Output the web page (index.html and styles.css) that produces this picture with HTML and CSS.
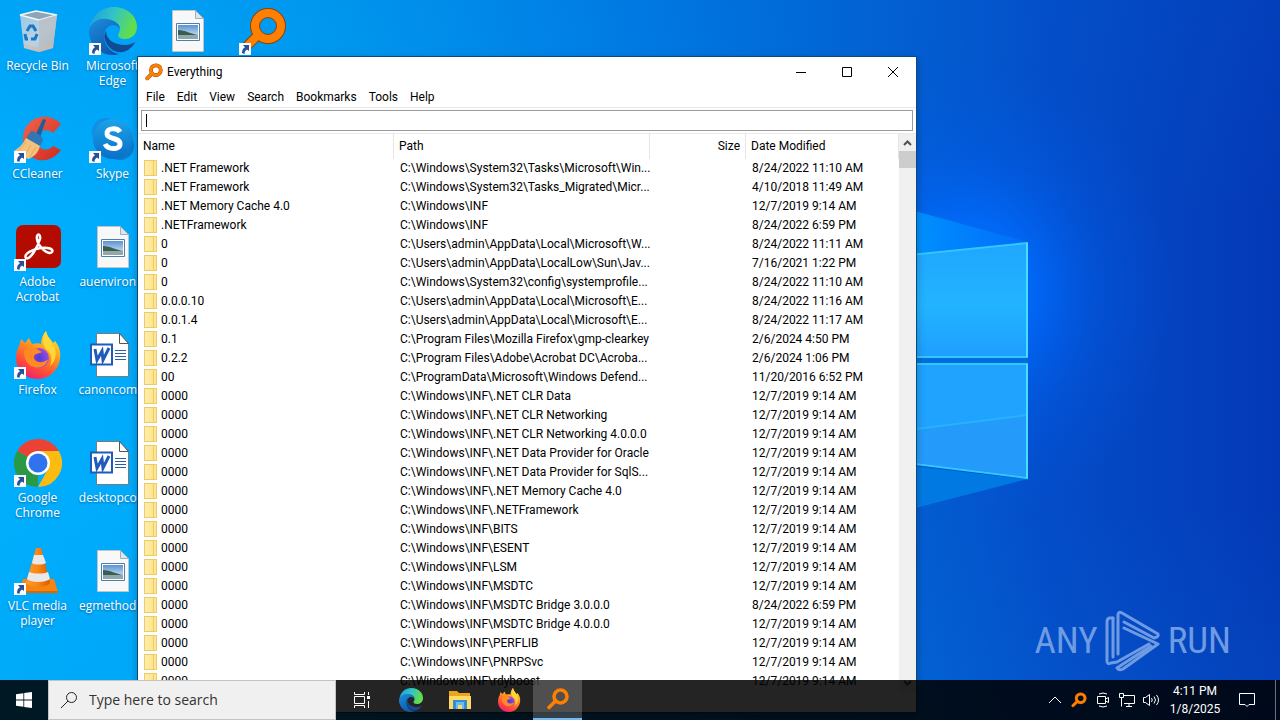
FILE: index.html
```html
<!DOCTYPE html>
<html lang="en">
<head>
<meta charset="utf-8">
<meta name="viewport" content="width=device-width, initial-scale=1">
<title>Everything</title>
<link rel="stylesheet" href="styles.css">
</head>
<body>
<svg class="defs" aria-hidden="true">
  <defs>
    <linearGradient id="edgeA" x1="0" y1="0" x2="1" y2="0.3"><stop offset="0" stop-color="#1c9be0"/><stop offset=".5" stop-color="#2fc3c9"/><stop offset="1" stop-color="#62dd4c"/></linearGradient>
    <linearGradient id="edgeB" x1="0" y1="0" x2="0.6" y2="1"><stop offset="0" stop-color="#1b8fdd"/><stop offset="1" stop-color="#0f57ae"/></linearGradient>
    <linearGradient id="ffA" x1="0.8" y1="0" x2="0.3" y2="1"><stop offset="0" stop-color="#ffe73c"/><stop offset=".4" stop-color="#ff9a1f"/><stop offset=".75" stop-color="#ff4b3a"/><stop offset="1" stop-color="#f01f72"/></linearGradient>
    <radialGradient id="ffB"><stop offset="0" stop-color="#4d3bd0"/><stop offset="1" stop-color="#9a4be0"/></radialGradient>
    <linearGradient id="sky" x1="0" y1="0" x2="0" y2="1"><stop offset="0" stop-color="#5b93d3"/><stop offset="1" stop-color="#e4f1fa"/></linearGradient>
    <linearGradient id="skypeA" x1="0" y1="0" x2="0" y2="1"><stop offset="0" stop-color="#1ba3ea"/><stop offset="1" stop-color="#0a6fc8"/></linearGradient>
    <linearGradient id="binA" x1="0" y1="0" x2="1" y2="1"><stop offset="0" stop-color="#a9cbe6"/><stop offset=".6" stop-color="#ccd6de"/><stop offset="1" stop-color="#a3adb6"/></linearGradient>
    <linearGradient id="coneA" x1="0" y1="0" x2="1" y2="0"><stop offset="0" stop-color="#ff9b2e"/><stop offset=".5" stop-color="#fb8512"/><stop offset="1" stop-color="#d45d00"/></linearGradient>
    <linearGradient id="ccA" x1="0" y1="0" x2="1" y2="1"><stop offset="0" stop-color="#f2644c"/><stop offset="1" stop-color="#cf2a20"/></linearGradient>
    <symbol id="edge" viewBox="0 0 48 48">
      <path d="M1 22C2 9 12 0 25 0c13 0 23 9 23 20 0 8-6 12-12 12-5 0-7-2-7-4 0-1 2-3 2-6 0-5-5-9-12-9C11 13 4 16 1 22z" fill="url(#edgeA)"/>
      <path d="M0 24c1-8 9-13 18-12 8 1 13 6 13 10-1-2-4-4-7-4-5 0-9 5-9 11 0 9 7 17 15 18-2 1-4 1-6 1C10 48 0 37 0 24z" fill="url(#edgeB)"/>
      <path d="M17 24c-2 3-2 6-1 9 3 9 12 15 21 11 4-2 8-6 9-9-3 2-6 3-10 3-10 0-19-5-19-14z" fill="#124a96"/>
    </symbol>
    <symbol id="firefox" viewBox="0 0 48 48">
      <path d="M5 15 7 8l4 4 4-5 3 6c4-1 7-1 9 0 0-5 2-10 5-13 1 6 5 8 7 12l2-2c5 6 6 12 5 18-2 12-11 20-22 20C11 48 2 39 2 27c0-5 1-9 3-12z" fill="url(#ffA)"/>
      <circle cx="25" cy="27" r="10" fill="url(#ffB)"/>
      <path d="M10 20c4-3 9-3 13-2l5 3c-3 2-7 1-8 4-1 4 4 7 8 6 3 0 4-2 6-2-2 6-8 9-14 7-6-1-10-7-10-16z" fill="#ff8a22"/>
      <path d="M32 0c1 6 5 9 8 15 3 7 2 15-4 20 3-7 1-13-3-16-5-5-5-12-1-19z" fill="#ffd838"/>
    </symbol>
    <symbol id="everything" viewBox="0 0 48 48">
      <path d="M18 29 6 41" stroke="#8e4205" stroke-width="10" stroke-linecap="round"/>
      <circle cx="29" cy="19" r="13" fill="none" stroke="#8e4205" stroke-width="10"/>
      <path d="M19 28 6 41" stroke="#ff8000" stroke-width="8" stroke-linecap="round"/>
      <circle cx="29" cy="19" r="13" fill="none" stroke="#ff8000" stroke-width="8"/>
    </symbol>
    <symbol id="everything-flat" viewBox="0 0 48 48">
      <path d="M18 29 6 41" stroke="#ff8000" stroke-width="7" stroke-linecap="round"/>
      <circle cx="29" cy="19" r="13" fill="none" stroke="#ff8000" stroke-width="7"/>
    </symbol>
    <symbol id="shortcut" viewBox="0 0 12 12">
      <path d="M0 0h12v12H0z" fill="#fafcff"/>
      <path d="M4 2h6v6L8 6.500C6 8 5.500 9 5.500 11L3 10c0-3 1-4.500 3-5.800z" fill="#27509b"/>
    </symbol>
    <symbol id="picture-file" viewBox="0 0 32 42">
      <path d="M.5.5h23l8 8v33H.5z" fill="#f8f8f8" stroke="#c4c4c4"/>
      <path d="M23.500.5v8h8z" fill="#dfe6ea" stroke="#9fb0b8"/>
      <path d="M4.500 13.500h23v17h-23z" fill="#fff" stroke="#4d7fa8"/>
      <path d="M6 15h20v14H6z" fill="url(#sky)"/>
      <path d="M6 20c7 0 13 4 20 5v1H6z" fill="#3c5c50"/>
      <path d="M6 25h20v4H6z" fill="#8fa9aa"/>
    </symbol>
    <symbol id="word-file" viewBox="0 0 39 44">
      <path d="M6.500.5h23l9 10v33h-32z" fill="#fff" stroke="#7b7b7b"/>
      <path d="M29.500.5v10h9z" fill="#fff" stroke="#555"/>
      <path d="M1 11.500h21v20H1z" fill="#fff" stroke="#1f5bbd" stroke-width="2"/>
      <path d="m5 16 2 11 5-9 1 9 6-12" fill="none" stroke="#1f5bbd" stroke-width="3"/>
      <path d="M25 17.500h11M25 20.500h11M25 23.500h11M25 26.500h11" stroke="#2c5ea8"/>
    </symbol>
    <symbol id="chrome" viewBox="0 0 48 48">
      <path d="M24 24 3.200 12A24 24 0 0 1 44.800 12z" fill="#ea4335"/>
      <path d="M24 24v24A24 24 0 0 1 3.200 12z" fill="#2a9945"/>
      <path d="M24 12h20.800A24 24 0 0 1 24 48l10-18z" fill="#fbbc12"/>
      <circle cx="24" cy="24" r="12" fill="#fff"/>
      <circle cx="24" cy="24" r="9.500" fill="#2f73ee"/>
    </symbol>
  </defs>
</svg>

<main class="desktop">
  <svg class="wallpaper" viewBox="0 0 1280 720" preserveAspectRatio="none" aria-hidden="true">
    <defs>
      <linearGradient id="base" x1="0" y1="0" x2="1" y2="0">
        <stop offset="0" stop-color="#00aefc"/><stop offset=".12" stop-color="#00aafb"/><stop offset=".28" stop-color="#009cf1"/><stop offset=".45" stop-color="#0084e8"/><stop offset=".6" stop-color="#006edc"/><stop offset=".73" stop-color="#035bd0"/><stop offset=".82" stop-color="#044cc8"/><stop offset="1" stop-color="#0439b6"/>
      </linearGradient>
      <linearGradient id="shade" x1="0" y1="0" x2="0" y2="1"><stop offset="0" stop-color="#0060d0" stop-opacity=".14"/><stop offset=".3" stop-color="#0060d0" stop-opacity="0"/><stop offset=".7" stop-color="#0084e0" stop-opacity="0"/><stop offset="1" stop-color="#0090e0" stop-opacity=".12"/></linearGradient>
      <radialGradient id="glow"><stop offset="0" stop-color="#0074ff"/><stop offset=".3" stop-color="#006cff" stop-opacity=".8"/><stop offset=".6" stop-color="#0060f0" stop-opacity=".35"/><stop offset="1" stop-color="#0058e0" stop-opacity="0"/></radialGradient>
      <linearGradient id="pane" x1="0" y1="0" x2="0" y2="1"><stop offset="0" stop-color="#20a6ff"/><stop offset=".55" stop-color="#22b4ff"/><stop offset="1" stop-color="#1f9eff"/></linearGradient>
      <linearGradient id="beam" x1="0" y1="0" x2="1" y2="0"><stop offset="0" stop-color="#0098ff"/><stop offset="1" stop-color="#0080ff" stop-opacity=".3"/></linearGradient>
    </defs>
    <path d="M0 0h1280v720H0z" fill="url(#base)"/>
    <path d="M0 0h1280v720H0z" fill="url(#shade)"/>
    <ellipse cx="970" cy="290" rx="210" ry="230" fill="url(#glow)"/>
    <path d="M900 207 1028 242 900 255z" fill="url(#beam)"/>
    <path d="M900 465 1028 479 900 512z" fill="#0082e6" opacity=".8"/>
    <path d="M900 256 1027 243V357H900z" fill="url(#pane)" stroke="#34c6ff" stroke-width="2"/>
    <path d="M900 364H1027V478L900 462z" fill="#20a2ff" stroke="#34c6ff" stroke-width="2"/>
    <path d="M900 431 1027 415V477L900 461z" fill="#249bfa"/>
    <path d="M900 431 1027 415" stroke="#24b4ff" stroke-width="2"/>
    <path d="M900 358h128v5H900z" fill="#006ddc"/>
    <path d="M1027 243v114M1027 364v114" stroke="#45e0ff" stroke-width="2"/>
  </svg>

  <nav class="shortcuts" aria-label="Desktop">
    <a class="shortcut" href="#bin"><span class="art"><svg class="pic" viewBox="0 0 48 48"><path d="M6 8 22 4l21 4-4 33-14 4-15-4z" fill="url(#binA)" opacity=".92"/><path d="M6 8 22 4l21 4-18 5z" fill="#8fa5b6" stroke="#f2f7fa" stroke-width="1.500"/><path d="M25 13V45l14-4 4-33z" fill="#b8bec4" opacity=".75"/><path d="M10 37 25 41l14-4v4l-14 4-15-4z" fill="#d6b9a6" opacity=".6"/><path d="m13 24 3-5h3l3 5M23 27l-2 5h-4M14 32h-2l-1-5" fill="none" stroke="#1877c8" stroke-width="3"/></svg></span><span>Recycle Bin</span></a>
    <a class="shortcut" href="#edge"><span class="art"><svg class="pic"><use href="#edge"/></svg><svg class="arrow"><use href="#shortcut"/></svg></span><span>Microsoft Edge</span></a>
    <a class="shortcut" href="#image" aria-label="Image file"><span class="art"><svg class="file"><use href="#picture-file"/></svg></span></a>
    <a class="shortcut" href="#everything" aria-label="Everything"><span class="art"><svg class="pic"><use href="#everything"/></svg><svg class="arrow"><use href="#shortcut"/></svg></span></a>

    <a class="shortcut" href="#ccleaner"><span class="art"><svg class="pic" viewBox="0 0 48 48"><path d="M47 9 39 18c-6-6-16-2-16 7s10 13 16 6l8 4C34 53 9 46 9 24 9 2 34-5 47 9z" fill="url(#ccA)"/><path d="M29 4 32 5 25 25 20 23z" fill="#17609c"/><path d="M17 16c6 1 11 5 12 9l-4 8-14-8z" fill="#3277b4"/><path d="M12 23 26 31C24 38 20 42 14 44L0 36C5 33 9 29 12 23z" fill="#f3c27c"/><path d="M12 27 4 36M17 30l-6 10M22 32l-6 10" stroke="#e2ac62"/></svg><svg class="arrow"><use href="#shortcut"/></svg></span><span>CCleaner</span></a>
    <a class="shortcut" href="#skype"><span class="art"><svg class="pic" viewBox="0 0 48 48"><circle cx="17" cy="17" r="14" fill="#138fe0"/><circle cx="31" cy="31" r="14" fill="#0b7ad0"/><circle cx="24" cy="24" r="20" fill="url(#skypeA)"/><path d="M31 17C28 12 17 13 18 19c1 6 13 3 13 10 0 6-12 6-15 0" fill="none" stroke="#fff" stroke-width="5"/></svg><svg class="arrow"><use href="#shortcut"/></svg></span><span>Skype</span></a>
    <span></span><span></span>

    <a class="shortcut" href="#acrobat"><span class="art"><svg class="pic" viewBox="0 0 48 48"><rect x="2" y="2" width="45" height="43" rx="7" fill="#b30b00"/><path d="M12 35c-3-4 7-9 15-10 7-1 13 1 11 4-3 4-14-5-15-13-1-6 4-6 3 0-2 7-10 22-14 19z" fill="none" stroke="#fff" stroke-width="2.500"/></svg><svg class="arrow"><use href="#shortcut"/></svg></span><span>Adobe Acrobat</span></a>
    <a class="shortcut" href="#auenviron"><span class="art"><svg class="file"><use href="#picture-file"/></svg></span><span>auenviron...</span></a>
    <span></span><span></span>

    <a class="shortcut" href="#firefox"><span class="art"><svg class="pic"><use href="#firefox"/></svg><svg class="arrow"><use href="#shortcut"/></svg></span><span>Firefox</span></a>
    <a class="shortcut" href="#canoncom"><span class="art word"><svg class="doc"><use href="#word-file"/></svg></span><span>canoncom...</span></a>
    <span></span><span></span>

    <a class="shortcut" href="#chrome"><span class="art"><svg class="pic"><use href="#chrome"/></svg><svg class="arrow"><use href="#shortcut"/></svg></span><span>Google Chrome</span></a>
    <a class="shortcut" href="#desktopco"><span class="art word"><svg class="doc"><use href="#word-file"/></svg></span><span>desktopco...</span></a>
    <span></span><span></span>

    <a class="shortcut" href="#vlc"><span class="art"><svg class="pic" viewBox="0 0 48 48"><path d="M9 32h31l4 13H5z" fill="#f58412"/><path d="M5 44h39v2H5z" fill="#d96800"/><path d="M22 1h5l9 35c-3 5-20 5-24 0z" fill="url(#coneA)"/><path d="M20 8h9l3 8c-4 2-11 2-14 0zM15 25c5 2 14 2 19 0l2 7c-5 4-19 4-23 0z" fill="#e8e8e8"/></svg><svg class="arrow"><use href="#shortcut"/></svg></span><span>VLC media player</span></a>
    <a class="shortcut" href="#egmethod"><span class="art"><svg class="file"><use href="#picture-file"/></svg></span><span>egmethod...</span></a>
  </nav>

  <div class="watermark">
    <span>ANY</span>
    <svg viewBox="0 0 56 62" aria-hidden="true"><g fill="none" stroke="currentColor" stroke-width="3" stroke-linejoin="round" stroke-linecap="round"><path d="M8 8H5Q2 8 2 12V51Q2 55 6 53L12 52 44 34"/><path d="M8 8V47"/><path d="M13 44V5Q13 1 17 3L53 24Q54 27 49 28L19 12"/><path d="M19 18 53 34 18 59Q14 61 12 58L18 54 46 36"/></g></svg>
    <span>RUN</span>
  </div>

  <section class="window" aria-label="Everything">
    <header class="titlebar">
      <svg class="app-icon"><use href="#everything"/></svg>
      <h1>Everything</h1>
      <button type="button" aria-label="Minimize"><svg viewBox="0 0 10 10"><path d="M0 5.500h10"/></svg></button>
      <button type="button" aria-label="Maximize"><svg viewBox="0 0 10 10"><path d="M.5.5h9v9h-9z"/></svg></button>
      <button type="button" aria-label="Close"><svg viewBox="0 0 10 10"><path d="m0 0 10 10M10 0 0 10"/></svg></button>
    </header>
    <div class="menubar">
      <button type="button">File</button><button type="button">Edit</button><button type="button">View</button><button type="button">Search</button><button type="button">Bookmarks</button><button type="button">Tools</button><button type="button">Help</button>
    </div>
    <div class="query"><input type="text" aria-label="Search files"><i class="caret"></i></div>
    <div class="results">
      <div class="list">
      <table>
        <colgroup><col class="c-name"><col class="c-path"><col class="c-size"><col></colgroup>
        <thead><tr><th>Name</th><th>Path</th><th class="size">Size</th><th>Date Modified</th></tr></thead>
        <tbody>
          <tr><td><i></i>.NET Framework</td><td>C:\Windows\System32\Tasks\Microsoft\Win...</td><td></td><td>8/24/2022 11:10 AM</td></tr>
          <tr><td><i></i>.NET Framework</td><td>C:\Windows\System32\Tasks_Migrated\Micr...</td><td></td><td>4/10/2018 11:49 AM</td></tr>
          <tr><td><i></i>.NET Memory Cache 4.0</td><td>C:\Windows\INF</td><td></td><td>12/7/2019 9:14 AM</td></tr>
          <tr><td><i></i>.NETFramework</td><td>C:\Windows\INF</td><td></td><td>8/24/2022 6:59 PM</td></tr>
          <tr><td><i></i>0</td><td>C:\Users\admin\AppData\Local\Microsoft\W...</td><td></td><td>8/24/2022 11:11 AM</td></tr>
          <tr><td><i></i>0</td><td>C:\Users\admin\AppData\LocalLow\Sun\Jav...</td><td></td><td>7/16/2021 1:22 PM</td></tr>
          <tr><td><i></i>0</td><td>C:\Windows\System32\config\systemprofile...</td><td></td><td>8/24/2022 11:10 AM</td></tr>
          <tr><td><i></i>0.0.0.10</td><td>C:\Users\admin\AppData\Local\Microsoft\E...</td><td></td><td>8/24/2022 11:16 AM</td></tr>
          <tr><td><i></i>0.0.1.4</td><td>C:\Users\admin\AppData\Local\Microsoft\E...</td><td></td><td>8/24/2022 11:17 AM</td></tr>
          <tr><td><i></i>0.1</td><td>C:\Program Files\Mozilla Firefox\gmp-clearkey</td><td></td><td>2/6/2024 4:50 PM</td></tr>
          <tr><td><i></i>0.2.2</td><td>C:\Program Files\Adobe\Acrobat DC\Acroba...</td><td></td><td>2/6/2024 1:06 PM</td></tr>
          <tr><td><i></i>00</td><td>C:\ProgramData\Microsoft\Windows Defend...</td><td></td><td>11/20/2016 6:52 PM</td></tr>
          <tr><td><i></i>0000</td><td>C:\Windows\INF\.NET CLR Data</td><td></td><td>12/7/2019 9:14 AM</td></tr>
          <tr><td><i></i>0000</td><td>C:\Windows\INF\.NET CLR Networking</td><td></td><td>12/7/2019 9:14 AM</td></tr>
          <tr><td><i></i>0000</td><td>C:\Windows\INF\.NET CLR Networking 4.0.0.0</td><td></td><td>12/7/2019 9:14 AM</td></tr>
          <tr><td><i></i>0000</td><td>C:\Windows\INF\.NET Data Provider for Oracle</td><td></td><td>12/7/2019 9:14 AM</td></tr>
          <tr><td><i></i>0000</td><td>C:\Windows\INF\.NET Data Provider for SqlS...</td><td></td><td>12/7/2019 9:14 AM</td></tr>
          <tr><td><i></i>0000</td><td>C:\Windows\INF\.NET Memory Cache 4.0</td><td></td><td>12/7/2019 9:14 AM</td></tr>
          <tr><td><i></i>0000</td><td>C:\Windows\INF\.NETFramework</td><td></td><td>12/7/2019 9:14 AM</td></tr>
          <tr><td><i></i>0000</td><td>C:\Windows\INF\BITS</td><td></td><td>12/7/2019 9:14 AM</td></tr>
          <tr><td><i></i>0000</td><td>C:\Windows\INF\ESENT</td><td></td><td>12/7/2019 9:14 AM</td></tr>
          <tr><td><i></i>0000</td><td>C:\Windows\INF\LSM</td><td></td><td>12/7/2019 9:14 AM</td></tr>
          <tr><td><i></i>0000</td><td>C:\Windows\INF\MSDTC</td><td></td><td>12/7/2019 9:14 AM</td></tr>
          <tr><td><i></i>0000</td><td>C:\Windows\INF\MSDTC Bridge 3.0.0.0</td><td></td><td>8/24/2022 6:59 PM</td></tr>
          <tr><td><i></i>0000</td><td>C:\Windows\INF\MSDTC Bridge 4.0.0.0</td><td></td><td>12/7/2019 9:14 AM</td></tr>
          <tr><td><i></i>0000</td><td>C:\Windows\INF\PERFLIB</td><td></td><td>12/7/2019 9:14 AM</td></tr>
          <tr><td><i></i>0000</td><td>C:\Windows\INF\PNRPSvc</td><td></td><td>12/7/2019 9:14 AM</td></tr>
          <tr><td><i></i>0000</td><td>C:\Windows\INF\rdyboost</td><td></td><td>12/7/2019 9:14 AM</td></tr>
        </tbody>
      </table>
      </div>
      <div class="scrollbar">
        <button type="button" aria-label="Scroll up"><svg viewBox="0 0 9 6"><path d="m1 5 3.500-3.500L8 5"/></svg></button>
        <div class="thumb"></div>
        <button class="down" type="button" aria-label="Scroll down"><svg viewBox="0 0 9 6"><path d="m1 1 3.500 3.500L8 1"/></svg></button>
      </div>
    </div>
  </section>

  <footer class="taskbar">
    <button class="start" type="button" aria-label="Start"><svg viewBox="0 0 16 16"><path d="M0 2.200 7.400 1.200V7.600H0zM8.200 1.100 16 0V7.600H8.200zM0 8.400H7.400V14.800L0 13.800zM8.200 8.400H16V16L8.200 14.900z" fill="#fff"/></svg></button>
    <label class="search"><svg viewBox="0 0 16 16"><circle cx="10.500" cy="5.500" r="5"/><path d="M7 9 0 16"/></svg><input type="text" placeholder="Type here to search" aria-label="Type here to search"></label>
    <button class="task" type="button" aria-label="Task view"><svg class="task-view" viewBox="0 0 16 16"><path d="M.5 0v2.500h10V0M.5 4.500h10v7H.5zM.5 16v-2.500h10V16M14.500 0v3M14.500 9v7"/><path d="M13 4h3v3h-3z" fill="#fff" stroke="none"/></svg></button>
    <button class="task" type="button" aria-label="Microsoft Edge"><svg><use href="#edge"/></svg></button>
    <button class="task" type="button" aria-label="File Explorer"><svg viewBox="0 0 24 24"><path d="M1 3h8l2 2h11v16H1z" fill="#e8a61c"/><path d="M1 8h22v13H1z" fill="#ffd866"/><path d="M5 12h14v9h-4v-5H9v5H5z" fill="#2f8fd6"/><path d="M8 14h8v7h-2v-4h-4v4H8z" fill="#68bdf0"/></svg></button>
    <button class="task" type="button" aria-label="Firefox"><svg><use href="#firefox"/></svg></button>
    <button class="task active" type="button" aria-label="Everything"><svg><use href="#everything-flat"/></svg></button>
    <div class="tray">
      <button type="button" aria-label="Show hidden icons"><svg viewBox="0 0 16 16"><path d="m2 11 6-6 6 6"/></svg></button>
      <button type="button" aria-label="Everything"><svg><use href="#everything"/></svg></button>
      <button type="button" aria-label="Meet now"><svg viewBox="0 0 16 16"><path d="M2.500 4.500h8v7h-8zM10.500 7l3-1.500v5l-3-1.500M4 2q4-2 8 0M4 14q4 2 8 0"/></svg></button>
      <button type="button" aria-label="Network"><svg viewBox="0 0 16 16"><path d="M4.500 3.500h11v8H5M.5 1.500h4v4h-4zM2.500 5.500v9M7 14.500h6M10 11.500v3"/></svg></button>
      <button type="button" aria-label="Volume"><svg viewBox="0 0 16 16"><path d="M.5 5.500h2l4-3v11l-4-3h-2zM8.500 6q1.500 2 0 4M11 4.500q3 3.500 0 7M13.500 3q4 5 0 10"/></svg></button>
      <time class="clock" datetime="2025-01-08T16:11">4:11 PM<br>1/8/2025</time>
      <button class="notes" type="button" aria-label="Notifications"><svg viewBox="0 0 16 16"><path d="M.5 1.500h15v11H10L8 14.500 6 12.500H.5z"/></svg></button>
      <button class="show-desktop" type="button" aria-label="Show desktop"></button>
    </div>
  </footer>
</main>
</body>
</html>
```
FILE: styles.css
```css
* { box-sizing: border-box; }
html, body { height: 100%; }
body { margin: 0; font: 12px/15px "Open Sans", "Noto Sans", sans-serif; color: #000; }
button { margin: 0; padding: 0; border: 0; background: none; color: inherit; font: inherit; display: flex; align-items: center; justify-content: center; }
input { font: inherit; border: 0; outline: 0; padding: 0; background: none; min-width: 0; }
svg { display: block; flex: none; }
a { color: inherit; text-decoration: none; }
.defs { position: absolute; width: 0; height: 0; }

.desktop { position: relative; display: flex; flex-direction: column; justify-content: space-between; height: 100vh; min-height: 480px; overflow: hidden; background: #0450c9; }
.wallpaper { position: absolute; inset: 0; width: 100%; height: 100%; }

.shortcuts { position: relative; display: grid; grid-template-columns: repeat(4, 75px); grid-auto-rows: 108px; color: #fff; text-align: center; }
.shortcut { display: flex; flex-direction: column; align-items: center; gap: 3px; padding: 7px 4px 0; text-shadow: 0 1px 2px rgba(0, 40, 90, .5); }
.art { position: relative; display: flex; align-items: center; justify-content: center; width: 48px; height: 48px; }
.art.word { justify-content: flex-start; padding-left: 1px; }
.art .pic { width: 48px; height: 48px; }
.art .file { width: 32px; height: 42px; }
.art .doc { width: 39px; height: 44px; }
.art .arrow { position: absolute; left: 0; bottom: 0; width: 12px; height: 12px; }

.watermark { position: absolute; right: 49px; bottom: 48px; display: flex; align-items: center; gap: 7px; color: #6f9be3; font: 37px/62px "Liberation Sans Narrow", "Roboto Condensed", Roboto, sans-serif; }
.watermark svg { width: 56px; height: 62px; }

.window { position: absolute; left: 137px; top: 56px; width: 780px; height: 657px; display: flex; flex-direction: column; background: #fff; border: 1px solid #0c4a7c; box-shadow: 0 3px 8px rgba(0, 0, 0, .25); font-family: Roboto, "Open Sans", sans-serif; }
.titlebar { display: flex; align-items: center; height: 30px; padding-left: 7px; }
.titlebar h1 { flex: 1; margin: 0 0 0 4px; font-size: 12px; font-weight: 400; }
.app-icon { width: 18px; height: 18px; }
.titlebar button { width: 46px; height: 30px; }
.titlebar button svg { width: 10px; height: 10px; fill: none; stroke: #000; overflow: visible; }
.menubar { display: flex; height: 20px; padding-left: 2px; }
.menubar button { padding: 0 6px; }
.query { position: relative; padding: 2px 3px; border: solid #e9e9e9; border-width: 1px 0; }
.query input { display: block; width: 100%; height: 21px; padding: 0 4px; border: 1px solid #9a9a9a; background: #fff; }
.caret { position: absolute; left: 8px; top: 6px; width: 1px; height: 13px; background: #000; }

.results { display: flex; align-items: flex-start; }
.list { flex: 1; min-width: 0; }
table { width: 100%; table-layout: fixed; border-collapse: separate; border-spacing: 0; }
.c-name, .c-path { width: 256px; }
.c-size { width: 96px; }
th, td { padding: 0; font-weight: 400; text-align: left; white-space: nowrap; overflow: hidden; }
th { height: 25px; padding: 0 5px; border-right: 1px solid #e5e5e5; }
th.size { text-align: right; }
td { height: 19px; padding-left: 6px; line-height: 19px; }
td i { display: inline-block; width: 13px; height: 16px; margin: -2px 4px 0 0; border: 1px solid #eecb64; background: linear-gradient(90deg, #fdeeb0, #fde48c 75%, #eec65a 76%, #fde695 84%); vertical-align: middle; }
.scrollbar { display: flex; flex-direction: column; align-self: stretch; width: 17px; background: #f0f0f0; }
.scrollbar button { height: 17px; }
.scrollbar svg { width: 9px; height: 6px; fill: none; stroke: #505050; stroke-width: 2; }
.thumb { height: 17px; background: #cdcdcd; }
.scrollbar .down { margin-top: auto; }

.taskbar { position: relative; display: flex; height: 40px; background: rgba(0, 0, 0, .86); color: #fff; }
.start { width: 48px; }
.start svg { width: 16px; height: 16px; }
.search { display: flex; align-items: center; gap: 12px; width: 288px; margin-right: 1px; padding: 0 12px; border: 1px solid #c4c4c4; background: #f0f0f0; }
.search svg { width: 16px; height: 16px; fill: none; stroke: #222; }
.search input { flex: 1; font-size: 14px; line-height: 20px; }
.search input::placeholder { color: #333; opacity: 1; }
.task { width: 49px; }
.task svg { width: 24px; height: 24px; }
.task .task-view { width: 16px; height: 16px; fill: none; stroke: #fff; }
.active { background: rgba(255, 255, 255, .2); border-bottom: 2px solid #76b9ed; }
.tray { display: flex; margin-left: auto; }
.tray button { width: 24px; }
.tray svg { width: 16px; height: 16px; fill: none; stroke: #fff; }
.clock { align-self: center; width: 64px; text-align: center; line-height: 18px; font-family: Roboto, "Open Sans", sans-serif; }
.tray .notes { width: 40px; }
.tray .show-desktop { width: 5px; margin-left: 8px; border-left: 1px solid #6a7078; }
```
